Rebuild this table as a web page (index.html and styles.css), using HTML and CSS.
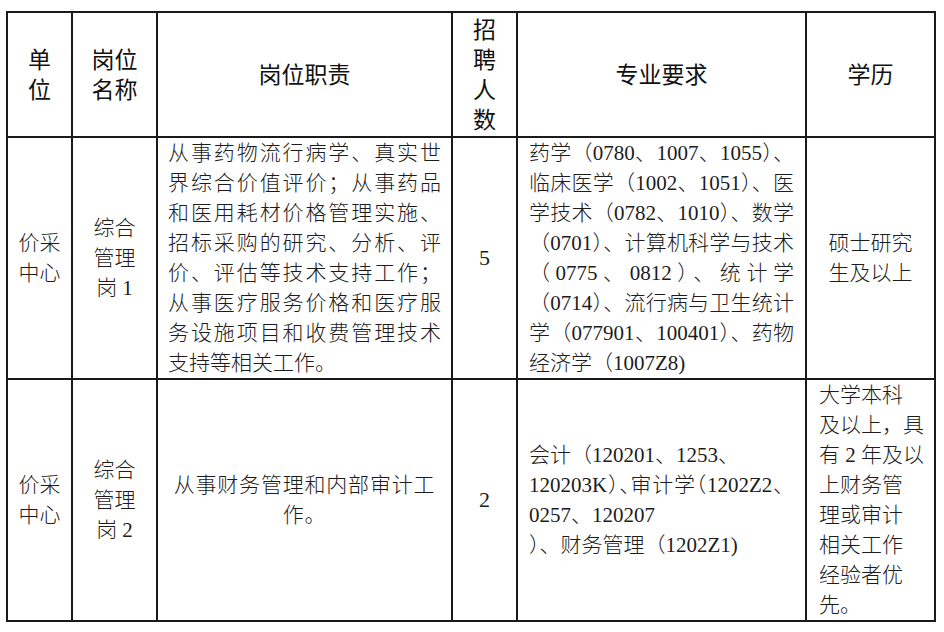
FILE: index.html
```html
<!DOCTYPE html>
<html lang="zh-CN">
<head>
<meta charset="utf-8">
<title>岗位表</title>
<link rel="stylesheet" href="styles.css">
</head>
<body>
<table class="jobs">
  <colgroup>
    <col class="c1"><col class="c2"><col class="c3"><col class="c4"><col class="c5"><col class="c6">
  </colgroup>
  <thead>
    <tr class="head">
      <th>单<br>位</th>
      <th>岗位<br>名称</th>
      <th>岗位职责</th>
      <th>招<br>聘<br>人<br>数</th>
      <th>专业要求</th>
      <th>学历</th>
    </tr>
  </thead>
  <tbody>
    <tr class="row">
      <td class="center">价采<br>中心</td>
      <td class="center">综合<br>管理<br>岗 1</td>
      <td class="duty">
        <span class="ln">从事药物流行病学、真实世</span>
        <span class="ln">界综合价值评价；从事药品</span>
        <span class="ln">和医用耗材价格管理实施、</span>
        <span class="ln">招标采购的研究、分析、评</span>
        <span class="ln">价、评估等技术支持工作；</span>
        <span class="ln">从事医疗服务价格和医疗服</span>
        <span class="ln">务设施项目和收费管理技术</span>
        <span class="ln end">支持等相关工作。</span>
      </td>
      <td class="center num">5</td>
      <td class="major">
        <span class="ln">药学（0780、1007、1055<span class="h">）</span>、</span>
        <span class="ln">临床医学（1002、1051<span class="h">）</span>、医</span>
        <span class="ln">学技术（0782、1010<span class="h">）</span>、数学</span>
        <span class="ln">（0701<span class="h">）</span>、计算机科学与技术</span>
        <span class="ln">（0775、0812）、统计学</span>
        <span class="ln">（0714<span class="h">）</span>、流行病与卫生统计</span>
        <span class="ln">学（077901、100401<span class="h">）</span>、药物</span>
        <span class="ln end">经济学（1007Z8)</span>
      </td>
      <td class="center">硕士研究<br>生及以上</td>
    </tr>
    <tr class="row">
      <td class="center">价采<br>中心</td>
      <td class="center">综合<br>管理<br>岗 2</td>
      <td class="center duty2">从事财务管理和内部审计工<br>作。</td>
      <td class="center num">2</td>
      <td class="major">
        <span class="ln end">会计（120201、1253、</span>
        <span class="ln">120203K<span class="h">）</span><span class="h">、</span>审计学<span class="h">（</span>1202Z2、</span>
        <span class="ln end">0257、120207</span>
        <span class="ln end">）、财务管理（1202Z1)</span>
      </td>
      <td class="edu">大学本科<br>及以上，具<br>有 2 年及以<br>上财务管<br>理或审计<br>相关工作<br>经验者优<br>先。</td>
    </tr>
  </tbody>
</table>
</body>
</html>
```

FILE: styles.css
```css
html, body {
  margin: 0;
  padding: 0;
  background: #ffffff;
}

.jobs {
  margin: 11px 0 0 6px;
  width: 930px;
  table-layout: fixed;
  border-collapse: collapse;
  font-family: "Liberation Serif", "Noto Sans CJK SC", serif;
  font-size: 21px;
  line-height: 30px;
  color: #1c1c1c;
}

.c1 { width: 65px; }
.c2 { width: 85px; }
.c3 { width: 295px; }
.c4 { width: 65px; }
.c5 { width: 289px; }
.c6 { width: 129px; }

.jobs th,
.jobs td {
  border: 2px solid #1a1a1a;
  padding: 0;
  vertical-align: middle;
}

.head th {
  height: 123px;
  font-family: "Liberation Sans", "Noto Sans CJK SC", sans-serif;
  font-weight: 400;
  font-size: 23px;
  line-height: 30px;
  color: #111111;
  text-align: center;
}

.row td {
  height: 239px;
  font-weight: 300;
}

.jobs td.center {
  text-align: center;
}

.jobs td.num {
  font-size: 22px;
}

.jobs td.duty {
  padding: 0 10px 0 10px;
}

.jobs td.duty2 {
  letter-spacing: 0.8px;
}

.jobs td.major {
  padding: 0 11px 0 11px;
}

.jobs td.edu {
  padding: 0 4px 0 12px;
  text-align: left;
}

.ln {
  display: block;
  text-align: justify;
  text-align-last: justify;
}

.ln.end {
  text-align: left;
  text-align-last: left;
}

.h {
  font-feature-settings: "halt" 1;
}
```
